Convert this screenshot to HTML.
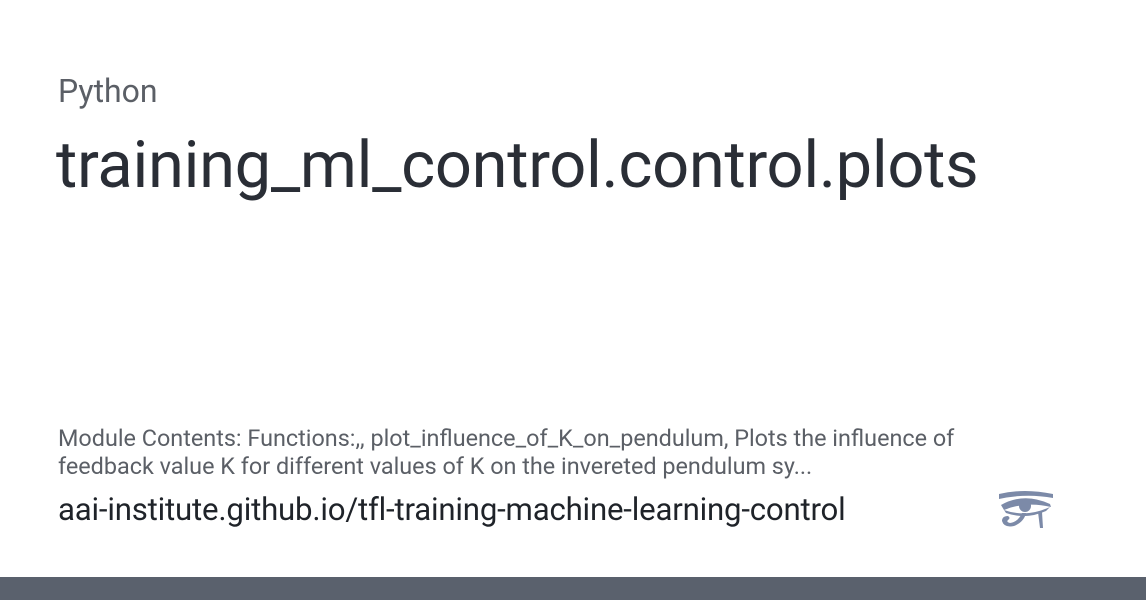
<!DOCTYPE html>
<html><head><meta charset="utf-8"><style>
html,body{margin:0;padding:0;}
body{width:1146px;height:600px;background:#fff;position:relative;overflow:hidden;font-family:"Roboto","Liberation Sans",sans-serif;}
.lang{position:absolute;left:58px;top:72px;font-size:32px;color:#5b5f66;}
.title{position:absolute;left:56px;top:127px;font-size:65px;color:#2a2e36;letter-spacing:-0.3px;}
.desc{position:absolute;left:58px;top:424px;width:960px;font-size:23.4px;line-height:28px;color:#5b5f66;}
.url{position:absolute;left:58px;top:491px;font-size:31.2px;color:#1f2329;letter-spacing:-0.2px;}
.bar{position:absolute;left:0;top:577px;width:1146px;height:23px;background:#5a616d;}
svg{position:absolute;left:996px;top:488px;}
</style></head><body>
<div class="lang">Python</div>
<div class="title">training_ml_control.control.plots</div>
<div class="desc">Module Contents: Functions:,, plot_influence_of_K_on_pendulum, Plots the influence of feedback value K for different values of K on the invereted pendulum sy...</div>
<div class="url">aai-institute.github.io/tfl-training-machine-learning-control</div>
<svg width="60" height="44" viewBox="0 0 60 44">
<g fill="#7c8aa8">
<path d="M3 6 Q28 0 57 6 L57 10 Q30 5 3 11Z"/>
<path d="M5 17 Q28 4 54 16 L55 19 Q30 13 8 22Z"/>
<path d="M8 22 Q30 30 54 19 L50 23 Q30 32 10 25Z"/>
<circle cx="29" cy="18" r="6"/>
<path d="M26 25 L30 25 Q28 34 18 38 Q8 40 6 33 Q6 28 12 28 Q15 30 12 32 Q10 34 14 35 Q22 34 26 25Z"/>
<path d="M42 24 L46 24 L47 40 L44 40Z"/>
</g>
</svg>
<div class="bar"></div>
</body></html>
